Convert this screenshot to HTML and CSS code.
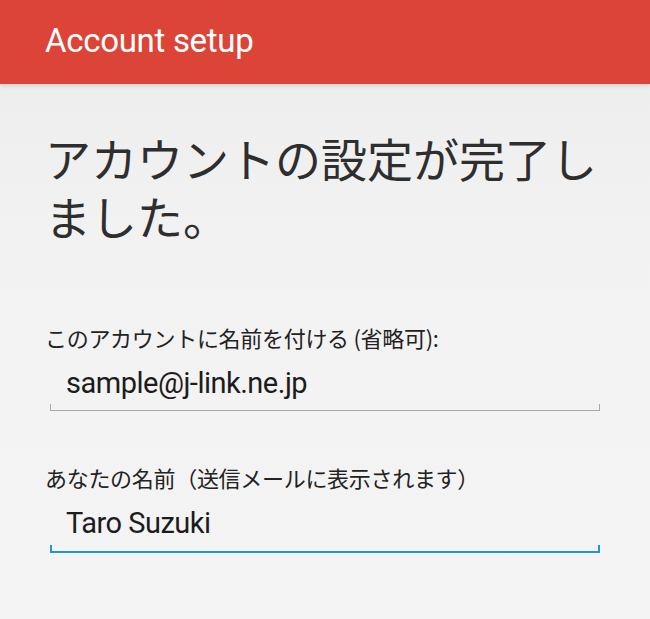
FILE: index.html
```html
<!DOCTYPE html>
<html lang="ja">
<head>
<meta charset="utf-8">
<title>Account setup</title>
<link rel="stylesheet" href="styles.css">
</head>
<body>
<header class="appbar">
  <h1 class="appbar-title">Account setup</h1>
</header>
<main class="content">
  <h2 class="headline">アカウントの設定が完了しました。</h2>
  <div class="form-group">
    <label class="field-label">このアカウントに名前を付ける (省略可):</label>
    <div class="field">
      <span class="field-value">sample@j-link.ne.jp</span>
    </div>
  </div>
  <div class="form-group form-group-second">
    <label class="field-label">あなたの名前（送信メールに表示されます）</label>
    <div class="field field-active">
      <span class="field-value">Taro Suzuki</span>
    </div>
  </div>
</main>
</body>
</html>
```

FILE: styles.css
```css
html, body {
  margin: 0;
  padding: 0;
}
body {
  width: 650px;
  height: 619px;
  overflow: hidden;
  background: linear-gradient(180deg, #ececec 0%, #f2f2f2 40%, #f4f4f4 100%);
  font-family: "Noto Sans CJK JP", "Noto Sans", sans-serif;
  color: #2b2b2b;
}
.appbar {
  height: 84px;
  background: #db4437;
  display: flex;
  align-items: center;
  padding-left: 45px;
  box-shadow: 0 2px 4px rgba(0, 0, 0, 0.12);
  position: relative;
}
.appbar-title {
  margin: 0;
  font-family: Roboto, "Noto Sans", sans-serif;
  font-weight: 400;
  font-size: 33px;
  letter-spacing: -0.3px;
  color: #ffffff;
  line-height: 1;
  padding-bottom: 4px;
}
.content {
  padding: 0 50px 0 45px;
}
.headline {
  margin: 44px 0 0 0;
  font-weight: 400;
  font-size: 46px;
  line-height: 58px;
  color: #2e2e2e;
  letter-spacing: 0;
}
.form-group {
  margin-top: 79px;
}
.form-group-second {
  margin-top: 52px;
}
.field-label {
  display: block;
  font-size: 22px;
  line-height: 28px;
  color: #222;
  letter-spacing: -0.3px;
}
.field {
  margin: 14px 0 0 5px;
  padding: 0 16px 9px 16px;
  height: 36px;
  position: relative;
  border-bottom: 1px solid #a8a8a8;
}
.field::before,
.field::after {
  content: "";
  position: absolute;
  bottom: -1px;
  width: 1px;
  height: 7px;
  background: #a8a8a8;
}
.field::before { left: 0; }
.field::after { right: 0; }
.field-active {
  padding-bottom: 10px;
  border-bottom: 2px solid #1e98d4;
}
.field-active::before,
.field-active::after {
  width: 2px;
  bottom: -2px;
  height: 8px;
  background: #1e98d4;
}
.field-value {
  font-family: Roboto, "Noto Sans", sans-serif;
  font-size: 29px;
  line-height: 36px;
  letter-spacing: -0.5px;
  color: #1c1c1c;
}
```
